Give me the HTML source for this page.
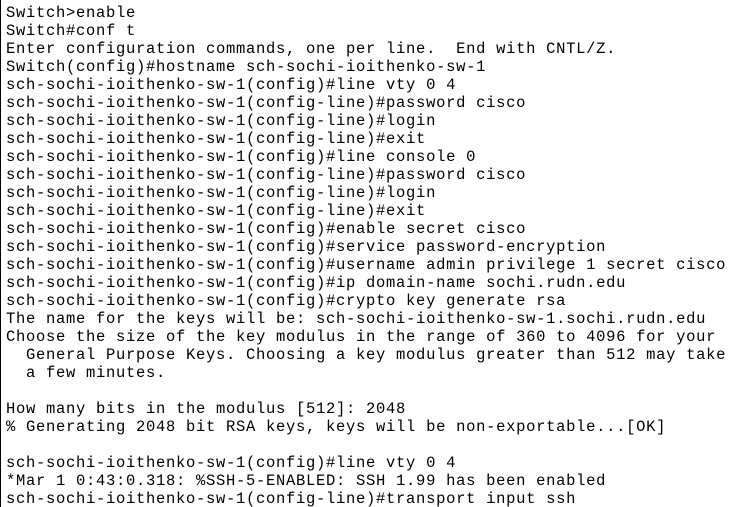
<!DOCTYPE html>
<html><head><style>
html,body{margin:0;padding:0;background:#fff;width:745px;height:507px;overflow:hidden}
body{border-left:1px solid #000;box-sizing:border-box}
pre{margin:0;padding:4px 0 0 5px;font-family:"Liberation Mono","Courier New",monospace;font-size:15.5px;letter-spacing:0.7px;line-height:18px;color:#000}
</style></head><body><pre>Switch&gt;enable
Switch#conf t
Enter configuration commands, one per line.  End with CNTL/Z.
Switch(config)#hostname sch-sochi-ioithenko-sw-1
sch-sochi-ioithenko-sw-1(config)#line vty 0 4
sch-sochi-ioithenko-sw-1(config-line)#password cisco
sch-sochi-ioithenko-sw-1(config-line)#login
sch-sochi-ioithenko-sw-1(config-line)#exit
sch-sochi-ioithenko-sw-1(config)#line console 0
sch-sochi-ioithenko-sw-1(config-line)#password cisco
sch-sochi-ioithenko-sw-1(config-line)#login
sch-sochi-ioithenko-sw-1(config-line)#exit
sch-sochi-ioithenko-sw-1(config)#enable secret cisco
sch-sochi-ioithenko-sw-1(config)#service password-encryption
sch-sochi-ioithenko-sw-1(config)#username admin privilege 1 secret cisco
sch-sochi-ioithenko-sw-1(config)#ip domain-name sochi.rudn.edu
sch-sochi-ioithenko-sw-1(config)#crypto key generate rsa
The name for the keys will be: sch-sochi-ioithenko-sw-1.sochi.rudn.edu
Choose the size of the key modulus in the range of 360 to 4096 for your
  General Purpose Keys. Choosing a key modulus greater than 512 may take
  a few minutes.

How many bits in the modulus [512]: 2048
% Generating 2048 bit RSA keys, keys will be non-exportable...[OK]

sch-sochi-ioithenko-sw-1(config)#line vty 0 4
*Mar 1 0:43:0.318: %SSH-5-ENABLED: SSH 1.99 has been enabled
sch-sochi-ioithenko-sw-1(config-line)#transport input ssh
</pre></body></html>
